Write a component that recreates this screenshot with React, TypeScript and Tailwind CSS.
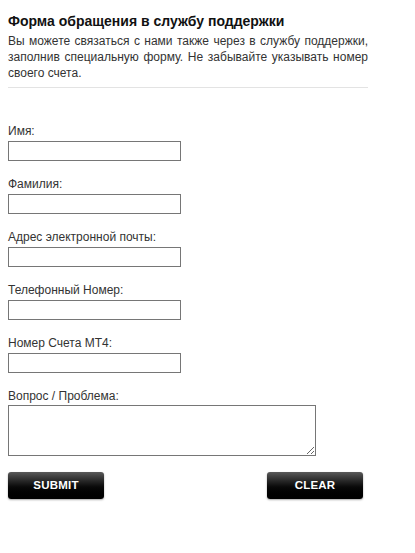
const fields = [
  { id: "name", label: "Имя:" },
  { id: "surname", label: "Фамилия:" },
  { id: "email", label: "Адрес электронной почты:" },
  { id: "phone", label: "Телефонный Номер:" },
  { id: "account", label: "Номер Счета MT4:" },
];

function BlackButton({ children }: { children: string }) {
  return (
    <button
      type="button"
      className="w-[96px] h-[27px] rounded-[3px] bg-gradient-to-b from-[#5a5a5a] via-[#0a0a0a] via-55% to-[#000] text-white text-[11.5px] font-bold tracking-[0.2px] shadow-[0_1px_2px_rgba(0,0,0,0.35)]"
    >
      {children}
    </button>
  );
}

export default function App() {
  return (
    <div className="w-[415px] min-h-[553px] bg-white pt-[12px] px-[8px] font-['Liberation_Sans',Arial,sans-serif]">
      <h2 className="text-[14px] leading-[18px] font-bold text-[#111]">Форма обращения в службу поддержки</h2>
      <p className="w-[360px] mt-[3px] text-[12px] leading-[16px] text-[#333] text-justify">
        Вы можете связаться с нами также через в службу поддержки, заполнив специальную форму. Не забывайте указывать номер своего счета.
      </p>
      <div className="w-[360px] mt-[6px] border-t border-[#e3e3e3]" />

      <form className="mt-[36px] flex flex-col">
        {fields.map((f) => (
          <div key={f.id} className="flex flex-col mb-[16px]">
            <label htmlFor={f.id} className="text-[12px] leading-[14px] text-[#333]">{f.label}</label>
            <input id={f.id} type="text" className="mt-[3px] w-[173px] h-[20px] border border-[#767676] bg-white px-[2px] text-[12px]" />
          </div>
        ))}
        <div className="flex flex-col">
          <label htmlFor="question" className="text-[12px] leading-[14px] text-[#333]">Вопрос / Проблема:</label>
          <textarea id="question" className="mt-[2px] w-[308px] h-[51px] border border-[#767676] bg-white text-[12px] resize" />
        </div>
        <div className="mt-[16px] flex w-[355px] justify-between">
          <BlackButton>SUBMIT</BlackButton>
          <BlackButton>CLEAR</BlackButton>
        </div>
      </form>
    </div>
  );
}
